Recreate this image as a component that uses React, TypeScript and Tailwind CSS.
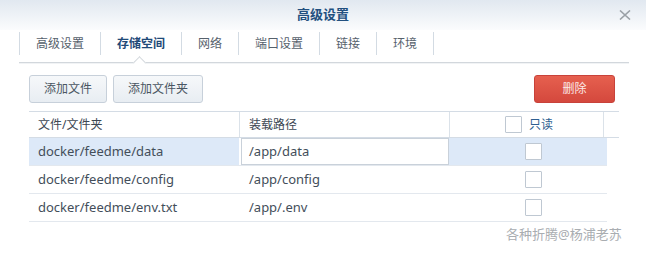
import React from "react";

const tabs = ["高级设置", "存储空间", "网络", "端口设置", "链接", "环境"];
const rows = [
  { src: "docker/feedme/data", dst: "/app/data", active: true },
  { src: "docker/feedme/config", dst: "/app/config", active: false },
  { src: "docker/feedme/env.txt", dst: "/app/.env", active: false },
];

function Box() {
  return <div className="w-[17px] h-[17px] border border-[#bfc8d2] bg-white rounded-[1px]" />;
}

export default function App() {
  return (
    <div
      className="relative w-[646px] h-[262px] bg-white overflow-hidden text-[#434e5a]"
      style={{ fontFamily: '"Noto Sans", "Noto Sans CJK SC", sans-serif' }}
    >
      {/* header */}
      <div className="relative h-[30px] bg-gradient-to-b from-[#e1e8f0] to-[#fbfcfd] flex items-center justify-center">
        <span className="text-[13px] font-bold text-[#22507f]">高级设置</span>
        <svg className="absolute left-[619px] top-[10px]" width="12" height="10" viewBox="0 0 12 10">
          <path d="M1 0.5 L11 9.5 M11 0.5 L1 9.5" stroke="#9aa0a6" strokeWidth="1.6" />
        </svg>
      </div>
      {/* tabs */}
      <div className="h-[32px] pl-[19px] pt-[2px] flex items-start">
        {tabs.map((t, i) => (
          <div
            key={t}
            className={
              "h-[23px] px-4 flex items-center border-l border-[#d3dbe3] text-[12px] " +
              (i === tabs.length - 1 ? "border-r " : "") +
              (i === 1 ? "font-bold text-[#1f4a78]" : "text-[#56616c]")
            }
          >
            {t}
          </div>
        ))}
      </div>
      {/* underline with caret */}
      <div className="relative ml-[19px] w-[610px] h-[2px] border-t border-[#d2d7dc] bg-[#f1f3f5]">
        <div className="absolute left-[116px] top-[-5px] w-[9px] h-[9px] rotate-45 border-l border-t border-[#d2d7dc] bg-white" />
      </div>
      {/* buttons */}
      <div className="mt-[11px] pl-[29px] pr-[31px] flex items-center">
        <button className="h-[28px] w-[78px] rounded-[3px] border border-[#c7d0da] bg-gradient-to-b from-[#f6f8fa] to-[#e8edf2] text-[12px] text-[#4a5662]">
          添加文件
        </button>
        <button className="ml-[6px] h-[28px] w-[90px] rounded-[3px] border border-[#c7d0da] bg-gradient-to-b from-[#f6f8fa] to-[#e8edf2] text-[12px] text-[#4a5662]">
          添加文件夹
        </button>
        <div className="flex-1" />
        <button className="h-[28px] w-[81px] rounded-[3px] border border-[#c8423a] bg-gradient-to-b from-[#e6604f] to-[#d4483d] text-[12px] text-[#fbe9e7]">
          删除
        </button>
      </div>
      {/* table */}
      <div className="mt-[8px] ml-[29px] w-[590px]">
        <div className="flex h-[27px] border-t border-b border-[#d4dce5] text-[12px]">
          <div className="w-[210px] pl-[9px] flex items-center text-[#3d4753]">文件/文件夹</div>
          <div className="w-[210px] pl-[9px] flex items-center border-l border-[#dbe2e9] text-[#3d4753]">装载路径</div>
          <div className="w-[154px] flex items-center justify-center border-l border-[#dbe2e9] gap-[7px] pl-[5px]">
            <Box />
            <span className="text-[#2e5f91]">只读</span>
          </div>
          <div className="flex-1 border-l border-[#dbe2e9]" />
        </div>
        {rows.map((r) => (
          <div key={r.src} className="flex w-[578px] h-[28px] border-b border-[#e3e8ee] text-[13px]">
            <div className={"w-[210px] pl-[9px] flex items-center " + (r.active ? "bg-[#dde9f8]" : "")}>{r.src}</div>
            {r.active ? (
              <div className="w-[208px] ml-[2px] h-[27px] flex items-center pl-[7px] border border-[#c9d1da] bg-white">
                {r.dst}
              </div>
            ) : (
              <div className="w-[210px] pl-[10px] flex items-center">{r.dst}</div>
            )}
            <div className={"flex-1 flex items-center pl-[76px] " + (r.active ? "bg-[#dde9f8]" : "")}>
              <Box />
            </div>
          </div>
        ))}
      </div>
      <div className="absolute left-[506px] top-[225px] text-[13px] text-[#a9adb1]">各种折腾@杨浦老苏</div>
    </div>
  );
}
